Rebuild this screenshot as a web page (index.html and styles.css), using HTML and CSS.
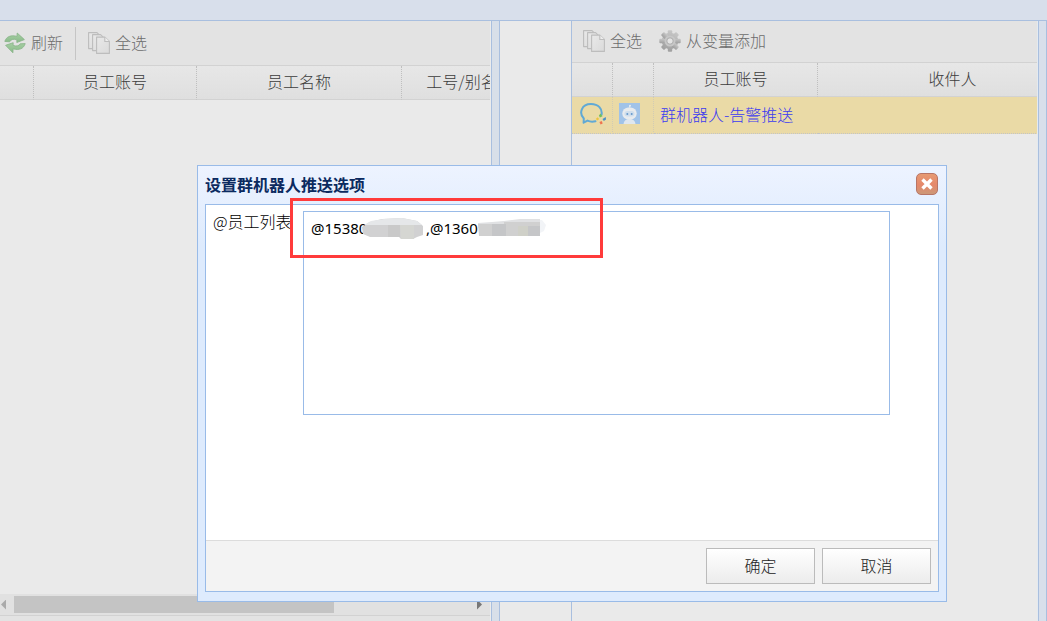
FILE: index.html
```html
<!DOCTYPE html>
<html lang="zh-CN">
<head>
<meta charset="utf-8">
<title>设置群机器人推送选项</title>
<link rel="stylesheet" href="styles.css">
</head>
<body>
<svg class="defs" width="0" height="0" aria-hidden="true">
  <defs>
    <linearGradient id="paper" x1="0" y1="0" x2="1" y2="1"><stop offset="0" stop-color="#e9e9e9"/><stop offset="1" stop-color="#dadada"/></linearGradient>
    <linearGradient id="leaf" x1="0" y1="0" x2="0" y2="1"><stop offset="0" stop-color="#a6cfa4"/><stop offset="1" stop-color="#8abb89"/></linearGradient>
    <linearGradient id="steel" x1="0" y1="0" x2="0" y2="1"><stop offset="0" stop-color="#c6c6c6"/><stop offset="1" stop-color="#a0a0a0"/></linearGradient>
    <symbol id="pages" viewBox="0 0 22 22">
      <g fill="url(#paper)" stroke="#bdbdbd" stroke-width="1.1" stroke-linejoin="round">
        <path d="M.6.6h8.4l3 3v13H.6z"/>
        <path d="M4.600 2.600h8l3 3v13h-11z"/>
        <path d="M8.600 5.100h8.200l4.600 4.400v11.900H8.600z"/>
        <path d="M16.800 5.100v4.400h4.600" fill="#ececec"/>
      </g>
    </symbol>
  </defs>
</svg>
<header class="topbar"></header>
<main class="workspace">
  <section class="panel source">
    <div class="toolbar tall">
      <button class="tool" type="button">
        <svg width="22" height="22" viewBox="0 0 22 22"><g fill="url(#leaf)" stroke="#87b286" stroke-width=".8" stroke-linejoin="round"><path d="M.8 9.400C2.300 4.600 7 2.700 13 4.400L13.200 1l7.200 6.600-7.600 2.900.1-2.700C9 6.700 6.800 7.500 5.700 9.800z"/><path d="M21.200 11.600c-1.500 5.200-6.200 7-12.100 5.200L8.900 20.800 1.600 13.300 9.200 10.700 9.100 13.400c3.800 1.200 6 .4 7.100-1.600z"/></g></svg>
        <span>刷新</span>
      </button>
      <span class="divider"></span>
      <button class="tool" type="button"><svg width="22" height="22"><use href="#pages"/></svg><span>全选</span></button>
    </div>
    <div class="grid">
      <table class="people">
        <colgroup><col class="w34"><col class="w163"><col class="w205"><col class="w120"></colgroup>
        <thead><tr><th></th><th>员工账号</th><th>员工名称</th><th>工号/别名</th></tr></thead>
      </table>
    </div>
    <div class="scroller">
      <span class="arrow left"></span><span class="thumb"></span><span class="arrow right"></span>
    </div>
    <div class="pager"></div>
  </section>
  <div class="splitter"></div>
  <section class="transfer"></section>
  <section class="panel chosen">
    <div class="toolbar">
      <button class="tool" type="button"><svg width="22" height="22"><use href="#pages"/></svg><span>全选</span></button>
      <button class="tool" type="button">
        <svg width="22" height="22" viewBox="0 0 22 22"><g transform="translate(11 11)"><g fill="url(#steel)"><circle r="8.300"/><g id="teeth"><rect x="-2.200" y="-10.700" width="4.400" height="21.400" rx="1"/><rect x="-10.700" y="-2.200" width="21.400" height="4.400" rx="1"/></g><use href="#teeth" transform="rotate(45)"/></g><circle r="5.500" fill="#c7c7c7"/><circle r="3.200" fill="#e3e3e3" stroke="#a0a0a0" stroke-width=".8"/></g></svg>
        <span>从变量添加</span>
      </button>
    </div>
    <div class="grid">
      <table class="recipients">
        <colgroup><col class="w41"><col class="w41"><col class="w164"><col class="w270"></colgroup>
        <thead><tr><th></th><th></th><th>员工账号</th><th>收件人</th></tr></thead>
        <tbody><tr>
          <td><svg class="pic" width="26" height="22" viewBox="0 0 26 22"><path d="M15.500 18.200c-3 .8-5.500.6-8-.6L3.600 19.700l.2-4.200C-1.300 10.200 1.300 1 11 1c7.500 0 11.500 5 10.600 10.500" fill="none" stroke="#61a9d5" stroke-width="2" stroke-linecap="round" stroke-linejoin="round"/><path d="M20.500 10.600l2 2.600-2.600 1.300-1-2z" fill="#72c05b"/><path d="M22.500 16l3.300-1.900.2 2.300-2.200 1.700z" fill="#4d91c5"/><path d="M19.500 19l2.200-1 1 2.600-2.200 1z" fill="#ef744f"/><path d="M15.800 16l1.700-1.800 1.700 1.900-1.800 1.500z" fill="#efc53e"/></svg></td>
          <td><svg class="pic" width="21" height="21" viewBox="0 0 21 21"><path fill="#a1c3e8" d="M0 0h21v21H0z"/><path d="M10.500 4.500V3.200" stroke="#e8eef3"/><circle cx="11" cy="2.800" r="1" fill="#e8eef3"/><path d="M4.500 21c.4-3.500 2.500-5 6-5s5.600 1.500 6 5z" fill="#dfe7ef"/><rect x="3.300" y="4.500" width="14.400" height="12" rx="6" fill="#e8ebee"/><rect x="5.500" y="8" width="10" height="5.500" rx="2.700" fill="#cfdeed"/><circle cx="8.300" cy="11" r="1" fill="#6698cb"/><circle cx="12.700" cy="11" r="1" fill="#6698cb"/></svg></td>
          <td class="name">群机器人-告警推送</td><td></td>
        </tr></tbody>
      </table>
    </div>
  </section>
  <div class="edge"></div>
</main>

<div class="dialog" role="dialog" aria-labelledby="dialog-title">
  <div class="titlebar">
    <h1 id="dialog-title">设置群机器人推送选项</h1>
    <button class="close" type="button" aria-label="关闭"><svg width="14" height="14" viewBox="0 0 14 14"><path d="M2.500 2.500l9 9M11.500 2.500l-9 9" stroke="#fff" stroke-width="3.400"/></svg></button>
  </div>
  <form class="content">
    <div class="field">
      <label for="staff">@员工列表</label>
      <div class="entry">
        <textarea id="staff" spellcheck="false">@15380               ,@1360</textarea>
        <svg class="mask first" width="63" height="22" viewBox="0 0 63 22"><path fill="#d1d1d2" d="M0 9l8-5L20 1 40 0l15 3 6 5v9l-6 2-4 2H39l-2-2H8l-7-3z"/><path fill="#e5e7e9" d="M2 7l7-4 13-2 18-1 15 3 5 4z"/><path fill="#c9c9c9" d="M26 7h12v12H26z"/><path fill="#d5d6d2" d="M38 7h14v14H39z"/></svg>
        <svg class="mask second" width="70" height="18" viewBox="0 0 70 18"><path fill="#f2f4f7" d="M56 1h8l4 5-2 6-4 2h-6z"/><path fill="#e0e1e3" d="M0 4l14-1L26 2 42 0h20v9H0z"/><path fill="#d0d0d0" d="M0 5h26V3h36v14H1z"/><path fill="#c5c6c8" d="M14 5h14v12H14zM50 7h12v10H50z"/><path fill="#cfd0c8" d="M40 7h10v10H40z"/></svg>
      </div>
    </div>
    <div class="actions"><button type="button">确定</button><button type="button">取消</button></div>
  </form>
  <div class="highlight"></div>
</div>
</body>
</html>
```

FILE: styles.css
```css
* { box-sizing: border-box; }
html, body { height: 100%; }
body {
  margin: 0;
  display: flex;
  flex-direction: column;
  position: relative;
  overflow: hidden;
  background: #eaeaea;
  color: #3c3c3c;
  font: 300 16px/24px "Noto Sans CJK SC", "Noto Sans", sans-serif;
}
button, textarea { font: inherit; color: inherit; margin: 0; }
.defs { position: absolute; }
.topbar {
  flex: none;
  height: 21px;
  background: #d8dfeb;
  border-bottom: 1px solid #a9bfdf;
}
.workspace {
  flex: 1;
  min-height: 0;
  display: grid;
  grid-template-columns: minmax(0, 491fr) 9px 71px minmax(0, 467fr) 9px;
  grid-template-rows: minmax(0, 1fr);
}
.panel { display: flex; flex-direction: column; min-width: 0; overflow: hidden; }
.source { border-right: 1px solid #ececec; }
.splitter {
  background: #d8dfe9;
  border: solid #a9bfdf;
  border-width: 0 1px;
}
.chosen { border-left: 1px solid #a9bfdf; border-right: 1px solid #e4eaf0; }
.edge { background: #d8dfeb; border: solid #a9bfdf; border-width: 0 1px; }

.toolbar {
  flex: none;
  height: 42px;
  display: flex;
  align-items: center;
  gap: 17px;
  padding: 0 11px;
  background: #e3e3e3;
  border-bottom: 1px solid #d2d2d2;
}
.toolbar.tall { height: 45px; gap: 12px; padding: 0 4px; }
.tool {
  display: flex;
  align-items: center;
  gap: 5px;
  padding: 0;
  border: 0;
  background: none;
  color: #6c6c6c;
  white-space: nowrap;
}
.tool span { padding-bottom: 3px; }
.tool svg { margin-bottom: 1px; }
.divider { width: 1px; height: 33px; background: #c5c5c5; }
.grid { flex: 1; min-height: 0; overflow: hidden; }
table { table-layout: fixed; border-collapse: separate; border-spacing: 0; }
.people { width: 522px; }
.recipients { width: 516px; }
.w34 { width: 34px; }
.w41 { width: 41px; }
.w120 { width: 120px; }
.w163 { width: 163px; }
.w164 { width: 164px; }
.w205 { width: 205px; }
.w270 { width: 270px; }
th {
  height: 34px;
  padding: 0 0 3px;
  font-weight: 300;
  white-space: nowrap;
  background: linear-gradient(#e7e7e7, #dfdfdf);
  border-right: 1px dotted #bfbfbf;
  border-bottom: 1px solid #d2d2d2;
}
td {
  height: 37px;
  padding: 0 0 3px 6px;
  background: #eadaa6;
  border-right: 1px dotted #d1cbb5;
  border-bottom: 1px dotted #c4c4c4;
}
td:first-child { padding-left: 8px; }
td.name { color: #3c3cf0; border-right: 0; }
.pic { display: block; }

.scroller {
  flex: none;
  height: 21px;
  display: flex;
  align-items: center;
  padding: 0 8px 0 1px;
  background: #e1e1e1;
}
.thumb { width: 320px; height: 17px; margin-left: 8px; background: #c4c4c4; }
.arrow { width: 5px; height: 10px; background: #aaa; clip-path: polygon(100% 0, 0 50%, 100% 100%); }
.arrow.right { margin-left: auto; background: #777; clip-path: polygon(0 0, 100% 50%, 0 100%); }
.pager { flex: none; height: 6px; background: #e3e3e3; border-top: 1px solid #d2d2d2; }

.dialog {
  position: absolute;
  top: 165px;
  left: 197px;
  right: 100px;
  display: flex;
  flex-direction: column;
  padding: 0 7px 9px;
  background: linear-gradient(#edf3ff, #deebfd 80px);
  border: 1px solid #99bbe8;
}
.titlebar { display: flex; align-items: center; justify-content: space-between; height: 38px; padding: 0 1px 3px 0; }
h1 { margin: 0; font-size: 16px; line-height: 24px; font-weight: 700; color: #0b2a60; }
.close {
  display: grid;
  place-items: center;
  width: 22px;
  height: 22px;
  padding: 0;
  border: 1px solid #b87566;
  border-radius: 5px;
  background: linear-gradient(#e69a73, #e5886b 55%, #cc9877);
}
.content { border: 1px solid #99bbe8; background: #fff; color: #000; }
.field { display: flex; min-height: 335px; padding: 6px 48px 0 7px; }
label { width: 90px; margin-top: -2px; flex: none; white-space: nowrap; }
.entry { position: relative; flex: 1; }
textarea {
  display: block;
  width: 100%;
  height: 204px;
  padding: 4px 7px;
  border: 1px solid #99bbe8;
  background: #fff;
  resize: none;
  outline: 0;
  font-family: "Noto Sans", "Noto Sans CJK SC", sans-serif;
  font-size: 15px;
  font-weight: 400;
}
.mask { position: absolute; }
.mask.first { top: 7px; left: 59px; }
.mask.second { top: 8px; left: 175px; }
.actions {
  display: flex;
  justify-content: flex-end;
  gap: 7px;
  padding: 7px;
  background: #f3f3f3;
  border-top: 1px solid #dcdcdc;
}
.actions button {
  width: 109px;
  height: 36px;
  padding: 0 0 2px;
  border: 1px solid #bbb;
  background: linear-gradient(#fff, #ececec);
  color: #222;
}
.highlight {
  position: absolute;
  top: 32px;
  left: 92px;
  width: 313px;
  height: 60px;
  border: 3px solid #ff3b3b;
  pointer-events: none;
}
```
